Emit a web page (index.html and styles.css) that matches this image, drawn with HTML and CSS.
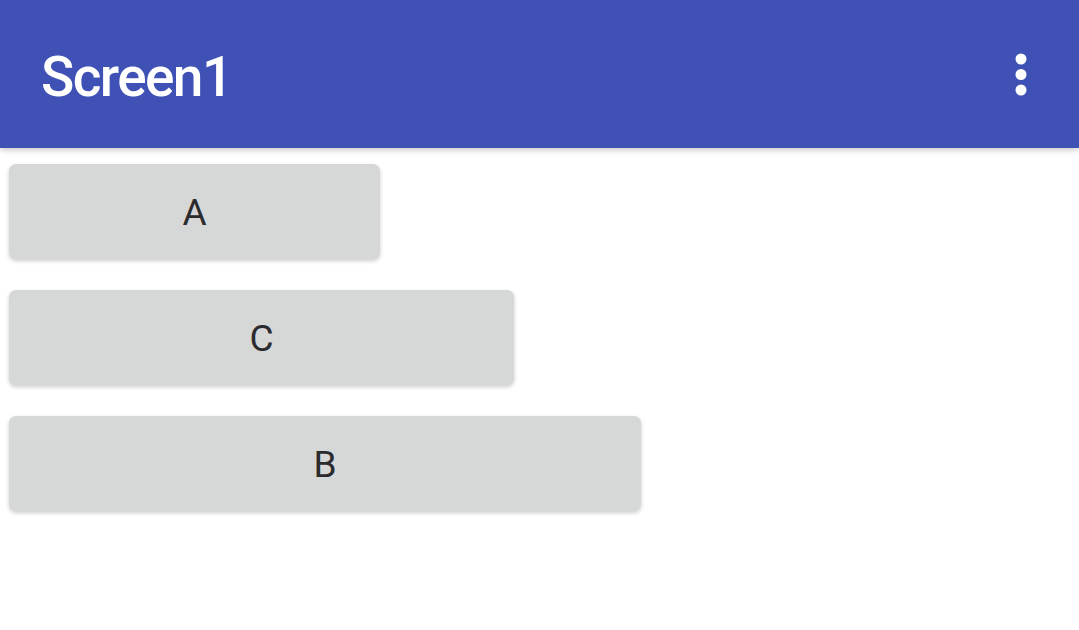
FILE: index.html
```
<!DOCTYPE html>
<html lang="en">

<head>
    <meta charset="utf-8">
    <title>Screen1</title>
    <link rel="stylesheet" href="styles.css">
</head>

<body>
<div class="screen">
    <div class="app-bar">
        <div class="app-title">Screen1</div>
        <div class="menu-btn">
            <svg width="12" height="44" viewBox="0 0 12 44">
                <circle cx="6" cy="6" r="5.5" fill="#fff"/>
                <circle cx="6" cy="21.5" r="5.5" fill="#fff"/>
                <circle cx="6" cy="37" r="5.5" fill="#fff"/>
            </svg>
        </div>
    </div>
    <div class="content">
        <div class="btn btn-a">A</div>
        <div class="btn btn-c">C</div>
        <div class="btn btn-b">B</div>
    </div>
</div>
</body>

</html>
```

FILE: styles.css
```
html, body {
    margin: 0;
    height: 100%;
    background: #ffffff;
}

.screen {
    font-family: Roboto, "Noto Sans", sans-serif;
    height: 100%;
}

.app-bar {
    height: 148px;
    background: #3f51b5;
    display: flex;
    align-items: center;
    justify-content: space-between;
    padding: 0 52px 0 41px;
    box-shadow: 0 2px 6px rgba(0, 0, 0, 0.22);
    position: relative;
}

.app-title {
    color: #ffffff;
    font-size: 55px;
    font-weight: 500;
    letter-spacing: -1.6px;
    margin-top: 6px;
}

.menu-btn {
    display: flex;
    margin-top: 2px;
}

.content {
    padding: 16px 9px;
    display: flex;
    flex-direction: column;
    align-items: flex-start;
    gap: 31px;
}

.btn {
    height: 95px;
    background: #d6d7d7;
    border-radius: 7px;
    box-shadow: 0 2px 4px rgba(0, 0, 0, 0.2);
    color: #2b2b2e;
    font-size: 37px;
    display: flex;
    align-items: center;
    justify-content: center;
    padding-top: 2px;
    box-sizing: border-box;
}

.btn-a {
    width: 371px;
}

.btn-c {
    width: 505px;
}

.btn-b {
    width: 632px;
}
```
